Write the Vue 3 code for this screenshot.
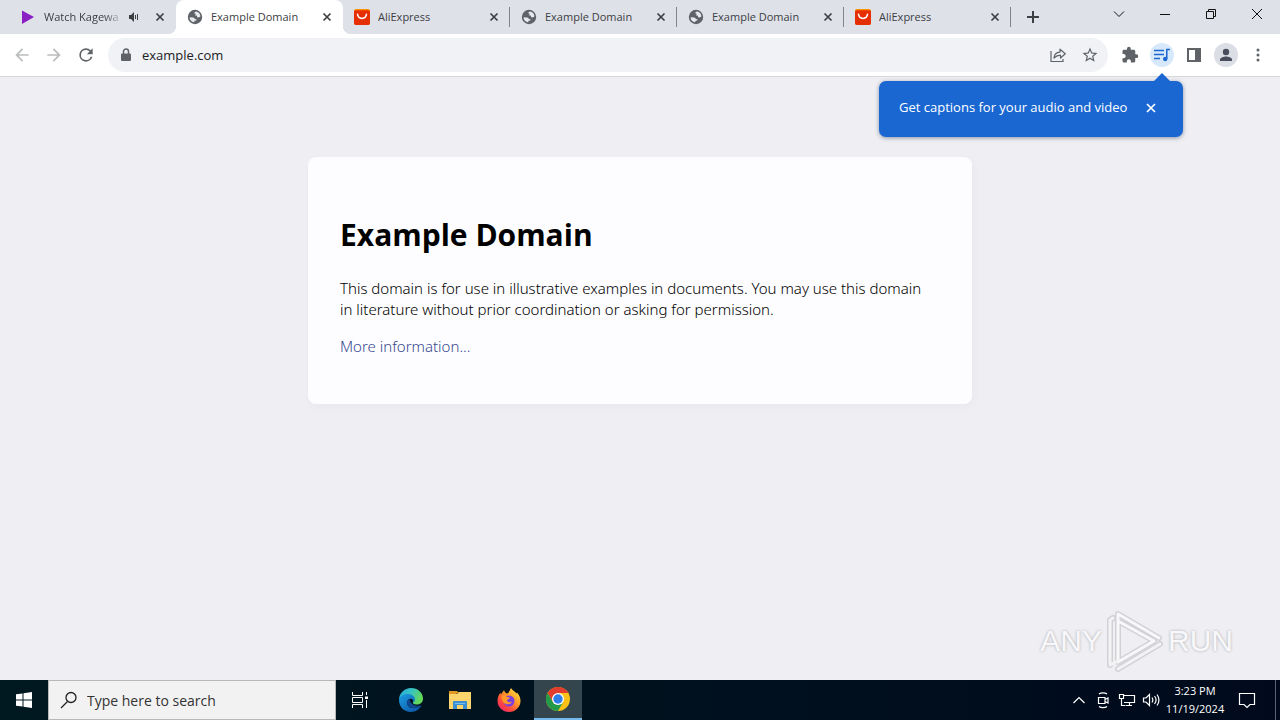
<template>
  <div class="desktop">
    <header class="browser">
      <div class="tab-strip">
        <div class="tabs">
          <div
            v-for="tab in tabs"
            :key="tab.id"
            class="tab"
            :class="{ active: tab.id === activeId, divided: tab.divided, playing: tab.audio }"
          >
            <svg v-if="tab.icon === 'play'" class="favicon" viewBox="0 0 16 16">
              <path d="M2 1.5L14 8L2 15z" fill="#8a1fc4" />
            </svg>
            <svg v-else-if="tab.icon === 'globe'" class="favicon" viewBox="0 0 16 16">
              <circle cx="8" cy="8" r="7.2" fill="#5f6368" />
              <path
                d="M9.4 2.6C7.8 2.8 7.2 3.6 7.4 4.6L8.8 4.8L8 6.4L9.8 6.4L10.2 8.2L11.6 8.6L13.4 7.6C13.4 5.2 11.8 3.2 9.4 2.6zM2.6 8.2L6 8.4C7.2 8.4 7.6 9.2 7.8 10L9.6 10.2L9.2 11.4L7.6 11.8L7.2 13.2C4.6 13 2.6 11 2.6 8.2z"
                fill="#e6e9ee"
              />
            </svg>
            <svg v-else class="favicon" viewBox="0 0 16 16">
              <rect width="16" height="16" rx="2" fill="#ff9100" />
              <path d="M0 2.5Q0 1.2 2 1.2H14Q16 1.2 16 2.5V14a2 2 0 0 1-2 2H2a2 2 0 0 1-2-2z" fill="#e62e04" />
              <path d="M3.5 5.2C4.3 10.8 11.7 10.8 12.5 5.2" fill="none" stroke="#fff" stroke-width="1.5" stroke-linecap="round" />
            </svg>
            <span class="tab-title">{{ tab.title }}</span>
            <svg v-if="tab.audio" class="audio" viewBox="0 0 12 12">
              <path d="M1 4h2l3-3v10L3 8H1z" fill="#3c4043" />
              <path d="M7.5 4v4M9.5 3v6" stroke="#3c4043" fill="none" />
            </svg>
            <button class="close" :aria-label="'Close ' + tab.title" @click="closeTab(tab.id)">
              <svg viewBox="0 0 16 16"><path d="M4.5 4.5l7 7M11.5 4.5l-7 7" stroke="#3c4043" stroke-width="1.7" /></svg>
            </button>
          </div>
          <button class="new-tab" aria-label="New tab">
            <svg viewBox="0 0 16 16"><path d="M8 2v12M2 8h12" stroke="#3c4043" stroke-width="2" /></svg>
          </button>
        </div>
        <div class="window-controls">
          <button aria-label="Search tabs">
            <svg viewBox="0 0 12 12"><path d="M1 3.5l5 5l5-5" /></svg>
          </button>
          <button aria-label="Minimize">
            <svg viewBox="0 0 12 12"><path d="M1 6.5h10" /></svg>
          </button>
          <button aria-label="Restore">
            <svg viewBox="0 0 12 12"><path d="M1.5 3.5h7v7h-7zM3.5 3.5v-2h7v7h-2" /></svg>
          </button>
          <button aria-label="Close window">
            <svg viewBox="0 0 12 12"><path d="M1 1l10 10M11 1L1 11" /></svg>
          </button>
        </div>
      </div>

      <div class="toolbar">
        <div class="group nav">
          <button class="tool disabled" aria-label="Back">
            <svg viewBox="0 0 24 24"><path d="M20 11H7.83l5.59-5.59L12 4l-8 8 8 8 1.41-1.41L7.83 13H20z" /></svg>
          </button>
          <button class="tool disabled" aria-label="Forward">
            <svg viewBox="0 0 24 24"><path d="M12 4l-1.41 1.41L16.17 11H4v2h12.17l-5.58 5.59L12 20l8-8z" /></svg>
          </button>
          <button class="tool" aria-label="Reload">
            <svg viewBox="0 0 24 24"><path d="M17.65 6.35A7.96 7.96 0 0 0 12 4a8 8 0 1 0 7.73 10h-2.08A6 6 0 1 1 12 6c1.66 0 3.14.69 4.22 1.78L13 11h7V4z" /></svg>
          </button>
        </div>
        <div class="omnibox">
          <svg class="lock" viewBox="0 0 12 14">
            <path d="M2 5.5h8a1 1 0 0 1 1 1V12a1 1 0 0 1-1 1H2a1 1 0 0 1-1-1V6.5a1 1 0 0 1 1-1z" fill="#5f6368" />
            <path d="M3.5 6V3.5a2.5 2.5 0 0 1 5 0V6" fill="none" stroke="#5f6368" stroke-width="1.5" />
          </svg>
          <input v-model="address" type="text" aria-label="Address" />
          <button class="tool" aria-label="Share">
            <svg viewBox="0 0 18 18">
              <path d="M2 5v10.5h12V13" fill="none" stroke="#5f6368" stroke-width="1.2" />
              <path d="M5 12c.3-4 2.5-5.7 6-5.9V3.2L16.3 7.7L11.5 12V9.2C8.7 9.2 7 10 5 12z" fill="none" stroke="#5f6368" stroke-width="1.2" stroke-linejoin="round" />
            </svg>
          </button>
          <button class="tool" aria-label="Bookmark this tab">
            <svg viewBox="0 0 24 24"><path d="M22 9.24l-7.19-.62L12 2 9.19 8.63 2 9.24l5.46 4.73L5.82 21 12 17.27 18.18 21l-1.63-7.03zM12 15.4l-3.76 2.27 1-4.28-3.32-2.88 4.38-.38L12 6.1l1.71 4.04 4.38.38-3.32 2.88 1 4.28z" /></svg>
          </button>
        </div>
        <div class="group">
          <button class="tool" aria-label="Extensions">
            <svg viewBox="0 0 24 24"><path d="M20.5 11H19V7c0-1.1-.9-2-2-2h-4V3.5a2.5 2.5 0 0 0-5 0V5H4c-1.1 0-1.99.9-1.99 2v3.8H3.5c1.49 0 2.7 1.21 2.7 2.7s-1.21 2.7-2.7 2.7H2V20c0 1.1.9 2 2 2h3.8v-1.5c0-1.49 1.21-2.7 2.7-2.7s2.7 1.21 2.7 2.7V22H17c1.1 0 2-.9 2-2v-4h1.5a2.5 2.5 0 0 0 0-5z" /></svg>
          </button>
          <div class="media">
            <button class="tool" aria-label="Control your music, videos, and more">
              <span class="disc blue">
                <svg viewBox="0 0 18 18">
                  <path d="M1 4.5h10M1 8.5h10M1 12.5h6" stroke="#1a67d2" stroke-width="1.5" />
                  <path d="M17 3.5h-3.2v9.5" fill="none" stroke="#1a67d2" stroke-width="1.5" />
                  <circle cx="12.2" cy="13" r="2.2" fill="#1a67d2" />
                </svg>
              </span>
            </button>
            <div v-if="showTip" class="callout">
              <span>Get captions for your audio and video</span>
              <button aria-label="Dismiss" @click="showTip = false">
                <svg viewBox="0 0 16 16"><path d="M4 5l8 8M12 5l-8 8" stroke="#fff" stroke-width="1.7" /></svg>
              </button>
            </div>
          </div>
          <button class="tool" aria-label="Side panel">
            <svg viewBox="0 0 18 18"><path d="M2 2h14v14H2zM4 4v10h6V4z" fill-rule="evenodd" /></svg>
          </button>
          <button class="tool" aria-label="Profile">
            <span class="disc grey">
              <svg viewBox="0 0 18 18"><circle cx="9" cy="6" r="3.2" fill="#4a4e5c" /><path d="M3 15v-1.5c0-2 4-3 6-3s6 1 6 3V15z" fill="#4a4e5c" /></svg>
            </span>
          </button>
          <button class="tool" aria-label="Menu">
            <svg viewBox="0 0 18 18"><circle cx="9" cy="4" r="1.5" /><circle cx="9" cy="9" r="1.5" /><circle cx="9" cy="14" r="1.5" /></svg>
          </button>
        </div>
      </div>
    </header>

    <main class="page">
      <article class="card">
        <h1>Example Domain</h1>
        <p>This domain is for use in illustrative examples in documents. You may use this domain in&nbsp;literature without prior coordination or asking for permission.</p>
        <p><a href="#">More information...</a></p>
      </article>
      <div class="watermark">
        <span>ANY</span>
        <svg viewBox="0 0 60 64">
          <g fill="none" stroke-linejoin="round" stroke-linecap="round">
            <path d="M13 53V5L54 29M13 6V53L49 32L13 12" stroke="#d2d2d6" stroke-width="6" />
            <path d="M5 56V11L8 9M13 60L55 35" stroke="#d2d2d6" stroke-width="6" />
            <path d="M13 53V5L54 29M13 53L49 32L13 12" stroke="#f8f8fa" stroke-width="3" />
            <path d="M5 56V11L8 9M13 60L55 35M5 56L13 52" stroke="#f3f3f5" stroke-width="3" />
          </g>
        </svg>
        <span>RUN</span>
      </div>
    </main>

    <footer class="taskbar">
      <button class="app" aria-label="Start">
        <svg class="start" viewBox="0 0 16 16"><path d="M0 2.3L6.5 1.4V7.5H0zM7.5 1.2L16 0V7.5H7.5zM0 8.5H6.5V14.6L0 13.7zM7.5 8.5H16V16L7.5 14.8z" fill="#fff" /></svg>
      </button>
      <label class="search">
        <svg viewBox="0 0 18 18"><circle cx="11" cy="6.5" r="5" /><path d="M7.5 10.5L1 17" /></svg>
        <input type="text" placeholder="Type here to search" aria-label="Type here to search" />
      </label>
      <button class="app task-view" aria-label="Task View">
        <svg viewBox="0 0 18 18" fill="none" stroke="#fff">
          <path d="M1.5 1v3.5h10V1M1.5 17v-3.5h10V17M1.5 6.5h10v5h-10zM15.5 1v3M15.5 9v8" />
          <path d="M14 5.5h3v2.5h-3z" fill="#fff" stroke="none" />
        </svg>
      </button>
      <button class="app" aria-label="Microsoft Edge">
        <svg class="logo" viewBox="0 0 24 24">
          <defs>
            <linearGradient id="edgeTop" x1="0" y1="0" x2="1" y2="0.4">
              <stop offset="0" stop-color="#27a8dc" />
              <stop offset="0.5" stop-color="#35c2c4" />
              <stop offset="1" stop-color="#62d85a" />
            </linearGradient>
            <linearGradient id="edgeLow" x1="0" y1="0" x2="1" y2="1">
              <stop offset="0" stop-color="#1b9de2" />
              <stop offset="1" stop-color="#0c4fa0" />
            </linearGradient>
          </defs>
          <path d="M0 12C0 5 5.5 0 12 0c7 0 12 5 12 10.5c0 4-3 6-6.5 6c-3 0-4-1.2-3.5-2.2c2.5-3.3.5-7.3-4-7.3C5 7 1 9 0 12z" fill="url(#edgeTop)" />
          <path d="M0 12C.5 8.5 4 6 8.5 6c4.5 0 7.5 2.7 7.5 5.5c0 1-.5 2-1.5 2.8c0-3-2-4-4-3.3C6.5 12.5 7.5 19 13 20c4 .7 7-1 9.5-2.7C20.5 21.5 16.5 24 12 24C5 24 0 19 0 12z" fill="url(#edgeLow)" />
          <path d="M10.5 11c-4 1.5-3 8 2.5 9c4 .7 7-1 9.5-2.7c-4 1.2-11 .2-12-6.3z" fill="#10488f" />
        </svg>
      </button>
      <button class="app" aria-label="File Explorer">
        <svg class="logo" viewBox="0 0 24 24">
          <path d="M1 3h8l2 2h-2l-1 2H1z" fill="#e09a24" />
          <path d="M1 6h8l2-2h12v17H1z" fill="#fbd56b" />
          <path d="M5 21v-7a1 1 0 0 1 1-1h12a1 1 0 0 1 1 1v7h-4v-4H9v4z" fill="#3b8fd0" />
          <path d="M7 15h10v1H7z" fill="#79bdeb" />
        </svg>
      </button>
      <button class="app" aria-label="Firefox">
        <svg class="logo" viewBox="0 0 24 24">
          <defs>
            <linearGradient id="fox" x1="1" y1="0" x2="0.2" y2="1">
              <stop offset="0" stop-color="#fff24a" />
              <stop offset="0.45" stop-color="#ff9a28" />
              <stop offset="0.75" stop-color="#ff4a3c" />
              <stop offset="1" stop-color="#f0246e" />
            </linearGradient>
          </defs>
          <path d="M14 0c1 2.5 4 3 5.5 5.5L20 4.5c2 2 3.5 5 3.5 8.5C23.5 19 18.5 24 12 24S.5 19 .5 13c0-3.5 1-6 3-8.5c0 1 .2 1.5.5 2C5 5 6.5 3 7 2c.5 2 1.5 3 3 3.5C12 5 12.5 2.5 14 0z" fill="url(#fox)" />
          <circle cx="12" cy="13" r="5.5" fill="#7a3fe0" />
          <path d="M5 8c2-.8 4-.2 5 1l3 .5c0 1.5-2.5 1.5-3 3c.5 2 3 2 5 1c-1 3-6 4-8.5 1C5 12.5 4.5 10 5 8z" fill="#ff9a28" />
        </svg>
      </button>
      <button class="app running" aria-label="Google Chrome">
        <svg class="logo" viewBox="0 0 24 24">
          <circle cx="12" cy="12" r="12" fill="#fbc116" />
          <path d="M1.6 6A12 12 0 0 1 22.4 6H12L6.8 15z" fill="#e33b2e" />
          <path d="M1.6 6A12 12 0 0 0 12 24L17.2 15H6.8z" fill="#229a49" />
          <circle cx="12" cy="12" r="6" fill="#fff" />
          <circle cx="12" cy="12" r="4.7" fill="#2f7de9" />
        </svg>
      </button>

      <div class="tray">
        <button aria-label="Show hidden icons">
          <svg viewBox="0 0 18 18"><path d="M3.5 12L9 6.5l5.5 5.5" /></svg>
        </button>
        <button aria-label="Meet Now">
          <svg viewBox="0 0 18 18"><path d="M4.5 6.5h6.5v6h-6.5zM11 8.5l3-1.5v5l-3-1.5M5 3c2-1.5 6-1.5 8 0M5 15.5c2 1.5 6 1.5 8 0" /></svg>
        </button>
        <button aria-label="Network">
          <svg viewBox="0 0 18 18"><path d="M6 4.5h10.5v7H6M1.5 3.5h4v4h-4zM3.5 7.5v7h4M11.5 11.5v3M8 14.5h6" /></svg>
        </button>
        <button aria-label="Volume">
          <svg viewBox="0 0 18 18"><path d="M1.5 7h2.5l3.5-3.5v11L4 11H1.5zM10 6.5c1 1.5 1 3.5 0 5M12.5 5c2 2.5 2 5.5 0 8M15 3.5c2.5 3.5 2.5 7.5 0 11" /></svg>
        </button>
        <time class="clock"><span>3:23 PM</span><span>11/19/2024</span></time>
        <button class="notices" aria-label="Notifications">
          <svg viewBox="0 0 18 18"><path d="M1.5 2.5h15v11H12l-3 3l-3-3H1.5z" /></svg>
        </button>
        <div class="show-desktop"></div>
      </div>
    </footer>
  </div>
</template>

<script setup>
import { ref } from 'vue'

const address = ref('example.com')
const activeId = ref(2)
const showTip = ref(true)

const tabs = ref([
  { id: 1, title: 'Watch Kagewa', icon: 'play', audio: true },
  { id: 2, title: 'Example Domain', icon: 'globe' },
  { id: 3, title: 'AliExpress', icon: 'shop', divided: true },
  { id: 4, title: 'Example Domain', icon: 'globe', divided: true },
  { id: 5, title: 'Example Domain', icon: 'globe', divided: true },
  { id: 6, title: 'AliExpress', icon: 'shop', divided: true }
])

const closeTab = (id) => {
  tabs.value = tabs.value.filter((tab) => tab.id !== id)
}
</script>

<style>
body {
  margin: 0;
}
</style>

<style scoped>
.desktop {
  display: flex;
  flex-direction: column;
  min-height: 100vh;
  font-family: "Open Sans", "Noto Sans", sans-serif;
  font-size: 12px;
}

* {
  box-sizing: border-box;
}

button {
  display: flex;
  align-items: center;
  justify-content: center;
  padding: 0;
  border: 0;
  background: none;
}

input {
  flex: 1;
  min-width: 0;
  padding: 0;
  border: 0;
  outline: 0;
  background: none;
  font-family: inherit;
}

svg {
  display: block;
  flex: none;
}

/* tabs */
.tab-strip {
  display: flex;
  justify-content: space-between;
  height: 34px;
  background: #dee1e8;
}

.tabs {
  display: flex;
  flex: 1;
  min-width: 0;
  padding-left: 9px;
}

.tab {
  position: relative;
  display: flex;
  align-items: center;
  flex: 0 1 167px;
  min-width: 0;
  padding: 0 8px 0 11px;
  color: #3c4043;
  font-size: 11px;
}

.tab.active {
  border-radius: 8px 8px 0 0;
  background: #fff;
}

.tab.active::before,
.tab.active::after {
  content: "";
  position: absolute;
  bottom: 0;
  width: 8px;
  height: 8px;
}

.tab.active::before {
  left: -8px;
  background: radial-gradient(circle at 0 0, transparent 8px, #fff 8px);
}

.tab.active::after {
  right: -8px;
  background: radial-gradient(circle at 100% 0, transparent 8px, #fff 8px);
}

.tab.divided::after {
  content: "";
  position: absolute;
  right: 0;
  top: 7px;
  width: 1px;
  height: 20px;
  background: #80848b;
}

.favicon {
  width: 16px;
  height: 16px;
  margin-right: 8px;
}

.tab-title {
  flex: 1;
  min-width: 0;
  overflow: hidden;
  line-height: 16px;
  white-space: nowrap;
}

.playing .tab-title {
  mask-image: linear-gradient(to left, transparent, #000 20px);
}

.audio {
  width: 12px;
  height: 12px;
  margin: 0 12px 0 4px;
}

.close,
.close svg {
  width: 16px;
  height: 16px;
}

.new-tab {
  width: 28px;
  margin-left: 8px;
}

.new-tab svg {
  width: 16px;
  height: 16px;
}

.window-controls {
  display: flex;
  height: 28px;
}

.window-controls button {
  width: 46px;
}

.window-controls svg {
  width: 12px;
  height: 12px;
  fill: none;
  stroke: #111;
}

/* toolbar */
.toolbar {
  display: flex;
  align-items: center;
  gap: 6px;
  height: 43px;
  padding: 0 6px;
  border-bottom: 1px solid #d5d7da;
  background: #fff;
}

.group {
  display: flex;
}

.tool {
  width: 32px;
  height: 32px;
}

.tool svg {
  width: 18px;
  height: 18px;
  fill: #5f6368;
}

.nav .tool svg {
  width: 20px;
  height: 20px;
}

.tool.disabled svg {
  fill: #babcbe;
}

.omnibox {
  display: flex;
  align-items: center;
  flex: 1;
  height: 34px;
  padding: 0 2px 0 12px;
  border-radius: 17px;
  background: #f0f2f5;
}

.omnibox input {
  color: #202124;
  font-size: 13px;
}

.lock {
  width: 12px;
  height: 14px;
  margin-right: 10px;
}

.disc {
  display: flex;
  align-items: center;
  justify-content: center;
  width: 24px;
  height: 24px;
  border-radius: 50%;
}

.disc.blue {
  background: #d8e8fb;
}

.disc.grey {
  background: #dcdee6;
}

.media {
  position: relative;
}

.callout {
  position: absolute;
  z-index: 2;
  top: 42px;
  right: -5px;
  display: flex;
  align-items: center;
  justify-content: space-between;
  width: 304px;
  height: 56px;
  padding: 0 24px 4px 20px;
  border-radius: 7px;
  background: #1a67d2;
  box-shadow: 0 1px 4px rgba(40, 60, 100, 0.5);
  color: #fff;
  font-size: 13px;
  white-space: nowrap;
}

.callout::before {
  content: "";
  position: absolute;
  top: -8px;
  right: 12px;
  border: 9px solid transparent;
  border-top: 0;
  border-bottom: 9px solid #1a67d2;
}

.callout svg {
  width: 16px;
  height: 16px;
}

/* web page */
.page {
  position: relative;
  flex: 1;
  padding: 80px 20px;
  background: #efeff3;
}

.card {
  max-width: 664px;
  margin: 0 auto;
  padding: 56px 32px 31px;
  border-radius: 8px;
  background: #fdfdff;
  box-shadow: 2px 3px 7px 2px rgba(0, 0, 0, 0.02);
  color: #000;
  font-size: 15px;
  line-height: 21px;
}

.card h1 {
  margin: 0 0 21px;
  font-size: 30px;
  font-weight: 700;
  line-height: 44px;
}

.card p {
  margin: 0 0 16px;
  font-family: "Noto Sans", "Open Sans", sans-serif;
  font-weight: 300;
}

.card a {
  color: #38488f;
  text-decoration: none;
}

.watermark {
  position: absolute;
  right: 47px;
  bottom: 7px;
  display: flex;
  align-items: center;
  gap: 3px;
  color: #f8f8fa;
  font-family: "Liberation Sans", sans-serif;
  font-size: 30px;
  text-shadow: 0 0 3px #a8a8ae;
}

.watermark svg {
  width: 60px;
  height: 64px;
}

/* taskbar */
.taskbar {
  display: flex;
  height: 40px;
  background: linear-gradient(to right, #001820, #000a1c);
}

.app {
  width: 48px;
  margin-right: 1px;
}

.app:first-child {
  margin-right: 0;
}

.app svg {
  width: 18px;
  height: 18px;
}

.app .start {
  width: 16px;
  height: 16px;
}

.app .logo {
  width: 24px;
  height: 24px;
}

.task-view {
  margin-right: 3px;
}

.running {
  border-bottom: 2px solid #76b9ed;
  background: #35454e;
}

.search {
  display: flex;
  align-items: center;
  flex: 0 1 288px;
  padding: 0 11px;
  gap: 9px;
  border: 1px solid #b8b8b8;
  background: #f2f2f2;
}

.search svg {
  width: 18px;
  height: 18px;
  fill: none;
  stroke: #222;
  stroke-width: 1.3;
}

.search input {
  font-size: 14px;
}

.search input::placeholder {
  color: #333;
}

.tray {
  display: flex;
  margin-left: auto;
  color: #fff;
}

.tray button {
  width: 24px;
}

.tray svg {
  width: 18px;
  height: 18px;
  fill: none;
  stroke: #fff;
  stroke-width: 1.2;
}

.clock {
  display: flex;
  flex-direction: column;
  align-items: center;
  justify-content: center;
  width: 60px;
  margin-left: 2px;
  font-size: 11px;
  line-height: 18px;
}

.tray .notices {
  width: 44px;
}

.show-desktop {
  width: 5px;
  margin-left: 6px;
  border-left: 1px solid #5b6370;
}
</style>
